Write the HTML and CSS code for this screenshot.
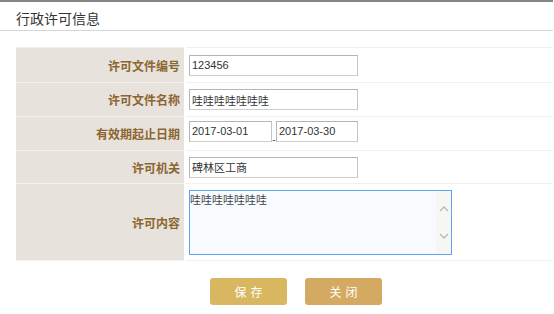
FILE: index.html
```html
<!DOCTYPE html>
<html lang="zh-CN">
<head>
<meta charset="utf-8">
<title>行政许可信息</title>
<link rel="stylesheet" href="styles.css">
</head>
<body>
<div class="page">
  <div class="header">行政许可信息</div>
  <div class="content">
    <table class="form">
      <tr class="first">
        <th>许可文件编号</th>
        <td><input class="txt" type="text" value="123456"></td>
      </tr>
      <tr>
        <th>许可文件名称</th>
        <td><input class="txt" type="text" value="哇哇哇哇哇哇哇"></td>
      </tr>
      <tr>
        <th>有效期起止日期</th>
        <td><input class="txt date" type="text" value="2017-03-01"><span class="sep">-</span><input class="txt date date2" type="text" value="2017-03-30"></td>
      </tr>
      <tr class="short">
        <th>许可机关</th>
        <td><input class="txt" type="text" value="碑林区工商"></td>
      </tr>
      <tr class="tall">
        <th>许可内容</th>
        <td>
          <div class="area">
            <textarea class="area-text">哇哇哇哇哇哇哇</textarea>
            <div class="scroll">
              <svg width="10" height="7" viewBox="0 0 10 7"><path d="M1 6 L5 2 L9 6" fill="none" stroke="#b8b8b8" stroke-width="1.4"/></svg>
              <svg width="10" height="7" viewBox="0 0 10 7"><path d="M1 1 L5 5 L9 1" fill="none" stroke="#b8b8b8" stroke-width="1.4"/></svg>
            </div>
          </div>
        </td>
      </tr>
    </table>
    <div class="actions">
      <button class="btn btn-save">保存</button>
      <button class="btn btn-close">关闭</button>
    </div>
  </div>
</div>
</body>
</html>
```
FILE: styles.css
```css
html, body {
  margin: 0;
  padding: 0;
  background: #fff;
}
body {
  font-family: "Liberation Sans", "Noto Sans CJK SC", sans-serif;
  color: #333;
}
.page {
  width: 553px;
  border-top: 2px solid #858585;
}
.header {
  height: 29px;
  box-sizing: border-box;
  padding: 3px 0 0 16px;
  line-height: 26px;
  font-size: 14px;
  color: #333;
  font-family: "Noto Sans CJK SC", sans-serif;
  border-bottom: 1px solid #d6d6d6;
}
.content {
  padding: 16px 0 0 16px;
}
.form {
  width: 100%;
  border-collapse: collapse;
  border-top: 1px solid #f0f0f0;
}
.form tr {
  height: 34px;
  border-bottom: 1px solid #f0f0f0;
}
.form tr.first {
  height: 35px;
}
.form tr.short {
  height: 33px;
}
.form tr.tall {
  height: 77px;
}
.form th {
  width: 164px;
  padding: 0 4px 0 0;
  text-align: right;
  background: #e8e2dc;
  border-right: 2px solid #fff;
  border-bottom: 1px solid #f4f1ee;
  color: #8b6630;
  font-family: "Noto Sans CJK SC", sans-serif;
  font-weight: bold;
  font-size: 12px;
}
.form td {
  padding: 0 0 0 3px;
  vertical-align: middle;
  background: #fff;
  line-height: 0;
}
.txt {
  box-sizing: border-box;
  width: 169px;
  height: 21px;
  margin: 0;
  padding: 0 2px;
  border: 1px solid #b5b5b5;
  border-bottom-color: #cdcdcd;
  border-right-color: #c4c4c4;
  font-family: "Liberation Sans", "Noto Sans CJK SC", sans-serif;
  font-size: 11px;
  color: #333;
  vertical-align: middle;
  background: #fff;
  outline: none;
}
.date {
  width: 83px;
}
.date2 {
  width: 82px;
}
.sep {
  display: inline-block;
  width: 4px;
  font-size: 10px;
  line-height: 12px;
  vertical-align: -8px;
  color: #555;
  text-align: center;
}
.area {
  display: flex;
  box-sizing: border-box;
  width: 263px;
  height: 65px;
  border: 1px solid #5aa6f2;
  background: #f7fbff;
}
.area-text {
  flex: 1;
  margin: 0;
  padding: 2px 0 0 0;
  border: 0;
  background: transparent;
  resize: none;
  outline: none;
  font-family: "Noto Sans CJK SC", sans-serif;
  font-size: 11px;
  line-height: 12px;
  color: #444;
}
.scroll {
  width: 15px;
  background: #f6f6f5;
  display: flex;
  flex-direction: column;
  align-items: center;
  justify-content: space-between;
  padding: 14px 0 14px;
}
.actions {
  display: flex;
  gap: 18px;
  padding: 17px 0 0 194px;
}
.btn {
  width: 77px;
  height: 27px;
  border: 0;
  border-radius: 3px;
  color: #fff;
  font-family: "Noto Sans CJK SC", sans-serif;
  font-size: 12px;
  letter-spacing: 4px;
  text-indent: 4px;
  padding: 0;
}
.btn-save {
  background: #d9b761;
}
.btn-close {
  background: #d4aa62;
}
```
